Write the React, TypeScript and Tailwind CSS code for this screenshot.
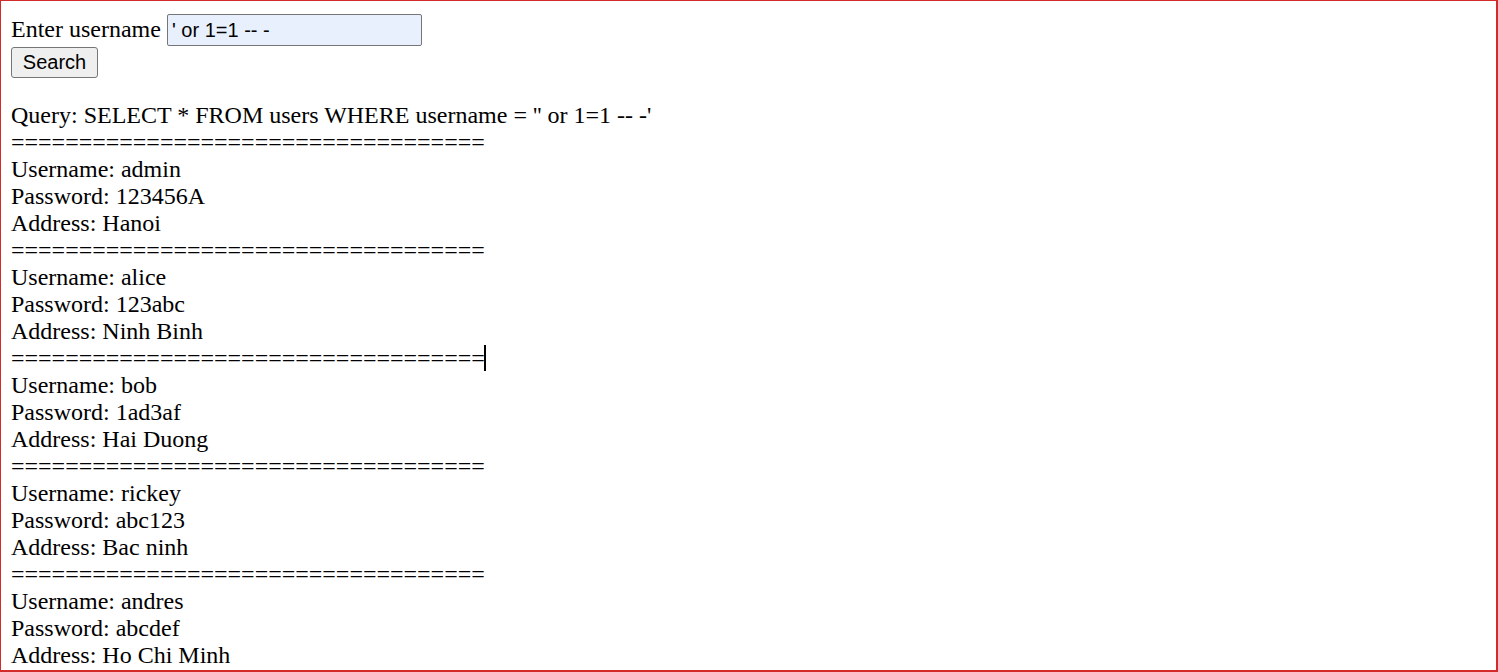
import React from 'react';

const users = [
  { username: 'admin', password: '123456A', address: 'Hanoi' },
  { username: 'alice', password: '123abc', address: 'Ninh Binh' },
  { username: 'bob', password: '1ad3af', address: 'Hai Duong' },
  { username: 'rickey', password: 'abc123', address: 'Bac ninh' },
  { username: 'andres', password: 'abcdef', address: 'Ho Chi Minh' },
];

const SEPARATOR = '='.repeat(35);

export default function App() {
  const payload = "' or 1=1 -- -";

  return (
    <div className="w-[1498px] h-[672px] overflow-hidden bg-white border-l border-t border-r-2 border-b-2 border-[#d32a2a] pl-[10px] pt-[13px] text-black text-[24px] leading-[27px] font-['Liberation_Serif','Times_New_Roman',serif]">
      <form className="flex flex-col items-start" onSubmit={(e) => e.preventDefault()}>
        <div className="flex items-start">
          <span className="mt-[2px] whitespace-pre">Enter username </span>
          <input
            type="text"
            defaultValue={payload}
            className="w-[255px] h-[32px] px-[4px] bg-[#e8f0fe] border border-[#767676] rounded-[2px] text-[20px] font-['Liberation_Sans',Arial,sans-serif] outline-none"
          />
        </div>
        <button
          type="submit"
          className="mt-[1px] w-[87px] h-[31px] pb-[1px] bg-[#efefef] border border-[#767676] rounded-[3px] text-[20px] leading-none font-['Liberation_Sans',Arial,sans-serif]"
        >
          Search
        </button>
      </form>

      <div className="mt-[24px]">
        <div className="whitespace-pre">Query: SELECT * FROM users WHERE username = '{payload}'</div>
        {users.map((u, i) => (
          <div key={u.username}>
            <div className="whitespace-pre">
              <span className="relative">
                {SEPARATOR}
                {i === 2 && <span className="absolute right-[-1px] top-[0px] w-[2px] h-[26px] bg-black" />}
              </span>
            </div>
            <div>Username: {u.username}</div>
            <div>Password: {u.password}</div>
            <div>Address: {u.address}</div>
          </div>
        ))}
      </div>
    </div>
  );
}
